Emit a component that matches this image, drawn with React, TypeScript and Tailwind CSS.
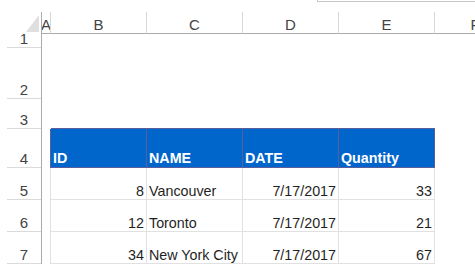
import React from "react";

const cols = [
  { key: "A", w: "w-[9px]" },
  { key: "B", w: "w-[96px]" },
  { key: "C", w: "w-[96px]" },
  { key: "D", w: "w-[96px]" },
  { key: "E", w: "w-[96px]" },
  { key: "F", w: "w-[81px]" },
];

const rows = [
  { id: 8, name: "Vancouver", date: "7/17/2017", qty: 33 },
  { id: 12, name: "Toronto", date: "7/17/2017", qty: 21 },
  { id: 34, name: "New York City", date: "7/17/2017", qty: 67 },
];

function RowHead({ n }: { n: number }) {
  return (
    <div className="w-[42px] shrink-0 h-full border-r border-[#ababab]">
      <div className="ml-[7px] h-full border-b border-[#dadada] flex items-end justify-center pb-[1px] text-[15px] leading-none text-[#444]">
        {n}
      </div>
    </div>
  );
}

// plain cell used in rows without table content
function Blank({ w, extra = "" }: { w: string; extra?: string }) {
  return <div className={`${w} shrink-0 h-full ${extra}`} />;
}

function DataCell({ w, right, children }: { w: string; right?: boolean; children: React.ReactNode }) {
  return (
    <div
      className={`${w} shrink-0 h-full border-r border-b border-[#e1e1e1] flex items-end pb-[1px] px-[2px] text-[14.3px] leading-none text-[#1f1f1f] whitespace-nowrap ${right ? "justify-end" : "justify-start"}`}
    >
      {children}
    </div>
  );
}

function HeadCell({ w, children }: { w: string; children: React.ReactNode }) {
  return (
    <div className={`${w} shrink-0 h-full bg-[#0066cc] border-r border-b border-[#5a5e9c] flex items-end pb-[2px] px-[2px] text-[14.3px] leading-none font-bold text-white whitespace-nowrap`}>
      {children}
    </div>
  );
}

export default function App() {
  return (
    <div className="w-[475px] h-[265px] overflow-hidden bg-white font-['Liberation_Sans',Arial,sans-serif]">
      {/* formula bar edge */}
      <div className="h-[12px]">
        <div className="ml-[317px] h-[2px] border-l border-b border-[#c6c6c6]" />
      </div>

      {/* column letters */}
      <div className="flex h-[22px]">
        <div className="w-[42px] shrink-0 h-full border-r border-[#ababab] relative">
          <svg width="42" height="22" className="absolute left-0 top-0">
            <polygon points="39,3 39,20 26,20" fill="#dfdfdf" />
          </svg>
        </div>
        {cols.map((c) => (
          <div
            key={c.key}
            className={`${c.w} shrink-0 h-full border-r border-b border-r-[#d8d8d8] border-b-[#ababab] flex items-end justify-center pb-[1px] text-[15px] leading-none text-[#444] overflow-hidden`}
          >
            {c.key}
          </div>
        ))}
      </div>

      {/* rows 1-2 empty */}
      <div className="flex h-[14px]">
        <RowHead n={1} />
      </div>
      <div className="flex h-[51px]">
        <RowHead n={2} />
      </div>

      {/* row 3: top edge of table header */}
      <div className="flex h-[30px]">
        <RowHead n={3} />
        <Blank w="w-[9px]" />
        <Blank w="w-[96px]" extra="border-b border-[#5a5e9c]" />
        <Blank w="w-[96px]" extra="border-b border-[#5a5e9c]" />
        <Blank w="w-[96px]" extra="border-b border-[#5a5e9c]" />
        <Blank w="w-[96px]" extra="border-b border-[#5a5e9c]" />
      </div>

      {/* row 4: table header */}
      <div className="flex h-[39px]">
        <RowHead n={4} />
        <Blank w="w-[9px]" extra="border-r border-[#5a5e9c]" />
        <HeadCell w="w-[96px]">ID</HeadCell>
        <HeadCell w="w-[96px]">NAME</HeadCell>
        <HeadCell w="w-[96px]">DATE</HeadCell>
        <HeadCell w="w-[96px]">Quantity</HeadCell>
      </div>

      {rows.map((r, i) => (
        <div key={r.id} className="flex h-[32px]">
          <RowHead n={i + 5} />
          <Blank w="w-[9px]" extra="border-r border-[#e1e1e1]" />
          <DataCell w="w-[96px]" right>{r.id}</DataCell>
          <DataCell w="w-[96px]">{r.name}</DataCell>
          <DataCell w="w-[96px]" right>{r.date}</DataCell>
          <DataCell w="w-[96px]" right>{r.qty}</DataCell>
        </div>
      ))}
    </div>
  );
}
